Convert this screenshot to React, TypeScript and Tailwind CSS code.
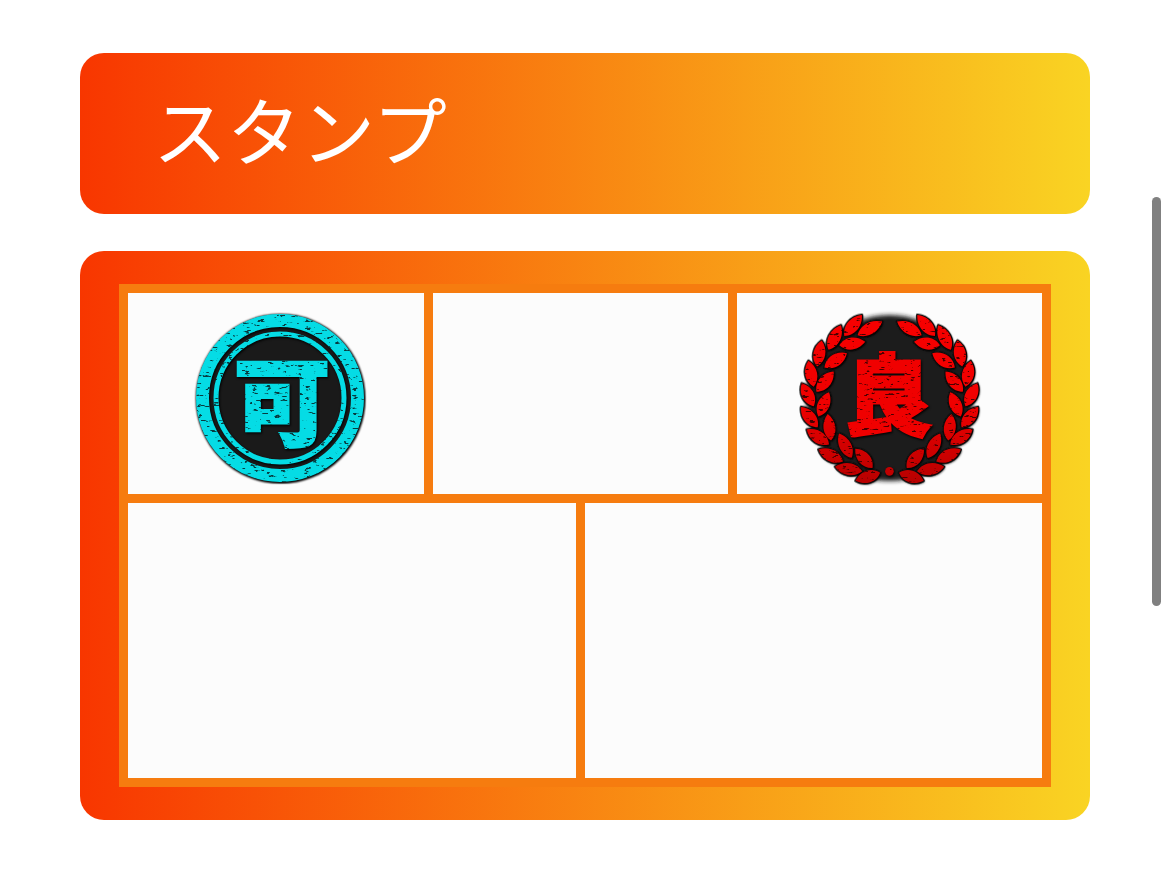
import React from "react";

const glyphFont = '"Noto Sans CJK JP", "Noto Sans", sans-serif';

function WornInk({ id, seed, ink }: { id: string; seed: number; ink: string }) {
  return (
    <filter id={id} x="-5%" y="-5%" width="110%" height="110%" colorInterpolationFilters="sRGB">
      <feTurbulence type="fractalNoise" baseFrequency="0.13 0.4" numOctaves={3} seed={seed} result="noise" />
      <feColorMatrix
        in="noise"
        type="matrix"
        values="0 0 0 0 0  0 0 0 0 0  0 0 0 0 0  12 0 0 0 -7.7"
        result="specks"
      />
      <feFlood floodColor={ink} result="ink" />
      <feComposite in="ink" in2="specks" operator="in" result="scratches" />
      <feComposite in="scratches" in2="SourceAlpha" operator="in" result="wear" />
      <feMerge result="worn">
        <feMergeNode in="SourceGraphic" />
        <feMergeNode in="wear" />
      </feMerge>
      <feDropShadow in="worn" dx="0.8" dy="1.2" stdDeviation="0.8" floodColor="#000" floodOpacity="1" />
    </filter>
  );
}

function FairStamp() {
  return (
    <svg viewBox="-1 1 185 185" className="size-[185px] shrink-0" role="img" aria-label="可">
      <defs>
        <WornInk id="wear-fair" seed={8} ink="#063c40" />
        <filter id="soft-fair">
          <feGaussianBlur stdDeviation="1" />
        </filter>
      </defs>
      <circle cx="91.5" cy="93.5" r="84.5" fill="#000" filter="url(#soft-fair)" />
      <circle cx="91" cy="93" r="82" fill="#1a1a1a" />
      <g filter="url(#wear-fair)">
        <circle cx="91" cy="93" r="77.5" fill="none" stroke="#05dce5" strokeWidth="13" />
        <circle cx="91" cy="93" r="64" fill="none" stroke="#05dce5" strokeWidth="5" />
        <text
          x="93"
          y="133"
          textAnchor="middle"
          fontSize="97"
          fontWeight="900"
          fontFamily={glyphFont}
          fill="#05dce5"
          stroke="#05dce5"
          strokeWidth="2"
        >
          可
        </text>
      </g>
    </svg>
  );
}

type Leaf = [number, number, number, number];

const leaves: Leaf[] = [
  [203, 27, 150, 90],
  [264, 47, 190, 88],
  [140, 58, 102, 132],
  [213, 108, 135, 118],
  [82, 104, 68, 182],
  [158, 142, 90, 185],
  [42, 165, 58, 243],
  [118, 197, 66, 258],
  [22, 233, 58, 302],
  [104, 260, 72, 333],
  [20, 304, 70, 365],
  [100, 325, 110, 405],
  [37, 372, 104, 417],
  [134, 384, 172, 458],
  [72, 432, 146, 468],
  [183, 430, 235, 488],
  [122, 484, 204, 498],
  [184, 526, 258, 502],
];

function leafPath([x1, y1, x2, y2]: Leaf) {
  const dx = x2 - x1;
  const dy = y2 - y1;
  const len = Math.hypot(dx, dy);
  const nx = (-dy / len) * 24;
  const ny = (dx / len) * 24;
  const ax = x1 + dx * 0.3;
  const ay = y1 + dy * 0.3;
  const bx = x1 + dx * 0.75;
  const by = y1 + dy * 0.75;
  return `M${x1} ${y1}C${ax + nx} ${ay + ny} ${bx + nx} ${by + ny} ${x2} ${y2}C${bx - nx} ${by - ny} ${ax - nx} ${ay - ny} ${x1} ${y1}Z`;
}

function Branch() {
  return (
    <>
      {leaves.map((leaf, i) => (
        <path key={i} d={leafPath(leaf)} fill="url(#red-good)" />
      ))}
    </>
  );
}

function GoodStamp() {
  return (
    <svg viewBox="1 0 190 185" className="h-[185px] w-[190px] shrink-0" role="img" aria-label="良">
      <defs>
        <WornInk id="wear-good" seed={21} ink="#4a0000" />
        <filter id="soft-good">
          <feGaussianBlur stdDeviation="2" />
        </filter>
        <filter id="halo-good">
          <feGaussianBlur stdDeviation="2" />
        </filter>
        <linearGradient id="red-good" gradientUnits="userSpaceOnUse" x1="0" y1="20" x2="0" y2="530">
          <stop offset="0" stopColor="#f70000" />
          <stop offset="0.55" stopColor="#ef0000" />
          <stop offset="1" stopColor="#b80000" />
        </linearGradient>
      </defs>
      <circle cx="95.5" cy="92" r="83" fill="#1a1a1a" filter="url(#soft-good)" />
      <g transform="translate(.5 0) scale(.332)">
        <g stroke="#101010" strokeWidth="8" strokeLinejoin="round" filter="url(#halo-good)">
          <Branch />
          <g transform="translate(573 0) scale(-1 1)">
            <Branch />
          </g>
        </g>
      </g>
      <g filter="url(#wear-good)">
        <g transform="translate(.5 0) scale(.332)">
          <Branch />
          <g transform="translate(573 0) scale(-1 1)">
            <Branch />
          </g>
          <circle cx="286" cy="498" r="13" fill="#c00000" />
        </g>
        <text
          x="94"
          y="122"
          textAnchor="middle"
          fontSize="88"
          fontWeight="900"
          fontFamily={glyphFont}
          fill="#f00000"
          stroke="#f00000"
          strokeWidth="3"
        >
          良
        </text>
      </g>
    </svg>
  );
}

export default function App() {
  return (
    <main className="relative min-h-screen bg-white pt-[53px] pr-[79px] pb-12 pl-20 font-['Noto_Sans_CJK_JP','Noto_Sans',sans-serif]">
      <header className="flex h-[161px] items-center rounded-3xl bg-linear-to-r/srgb from-[#f83600] to-[#f9d423] px-[73px] pb-3">
        <h1 className="text-[74px] leading-none font-normal text-white">スタンプ</h1>
      </header>

      <section
        aria-label="スタンプ"
        className="mt-[37px] rounded-3xl bg-linear-to-r/srgb from-[#f83600] to-[#f9d423] px-[39px] py-[33px]"
      >
        <div className="border-9 border-[#f67c0f] bg-[#fcfcfc]">
          <div className="grid h-[210px] grid-cols-3">
            <div className="flex items-center justify-center shadow-[inset_-9px_-9px_0_#f67c0f]">
              <FairStamp />
            </div>
            <div className="shadow-[inset_-9px_-9px_0_#f67c0f]" />
            <div className="flex items-center justify-center shadow-[inset_0_-9px_0_#f67c0f]">
              <GoodStamp />
            </div>
          </div>
          <div className="grid h-[275px] grid-cols-2">
            <div className="shadow-[inset_-9px_0_0_#f67c0f]" />
            <div />
          </div>
        </div>
      </section>

      <div className="absolute top-[197px] right-2 h-[409px] w-[9px] rounded-full bg-[#808080]" />
    </main>
  );
}
